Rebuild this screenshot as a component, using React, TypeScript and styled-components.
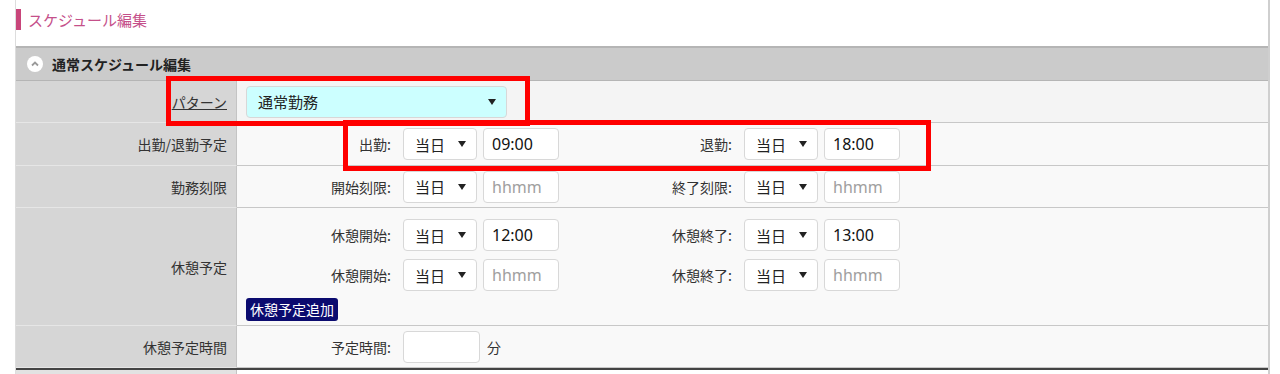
import React from 'react'
import styled, { createGlobalStyle } from 'styled-components'

const GlobalStyle = createGlobalStyle`
  body {
    margin: 0;
    background: #ffffff;
    font-family: 'Noto Sans CJK JP', 'Noto Sans', sans-serif;
    color: #333333;
  }
`

const Page = styled.div`
  position: relative;
  width: 1280px;
  height: 374px;
  overflow: hidden;
  padding-left: 15px;
  padding-right: 10px;
  box-sizing: border-box;
`

const Panel = styled.div`
  border-left: 1px solid #dddddd;
  border-right: 2px solid #cfcfcf;
  height: 100%;
`

const TitleBar = styled.div`
  height: 46px;
  padding-top: 9px;
  box-sizing: border-box;
`

const Title = styled.h1`
  margin: 0;
  border-left: 5px solid #c8457a;
  padding-left: 7px;
  height: 21px;
  line-height: 21px;
  font-size: 15px;
  font-weight: normal;
  color: #c5508a;
`

const SectionHeader = styled.div`
  display: flex;
  align-items: center;
  gap: 9px;
  height: 35px;
  padding-left: 11px;
  background: #cbcbcb;
  border-top: 2px solid #b5b5b5;
  border-bottom: 1px solid #b5b5b5;
  box-sizing: border-box;
  font-size: 14px;
  font-weight: bold;
  color: #222222;
`

const Toggle = styled.span`
  display: inline-flex;
  align-items: center;
  justify-content: center;
  width: 16px;
  height: 16px;
  border-radius: 50%;
  background: #ffffff;
`

const Table = styled.div`
  display: grid;
  grid-template-columns: 221px 1fr;
`

const LabelCell = styled.div`
  display: flex;
  align-items: center;
  justify-content: flex-end;
  padding-right: 9px;
  background: #d6d6d6;
  border-right: 1px solid #c4c4c4;
  border-bottom: 1px solid #e6e6e6;
  font-size: 14px;
  color: #333333;
`

const ValueCell = styled.div<{ $h: number; $shade?: boolean; $top?: boolean }>`
  display: flex;
  flex-direction: column;
  justify-content: ${p => (p.$top ? 'flex-start' : 'center')};
  gap: 8px;
  height: ${p => p.$h}px;
  padding-left: 9px;
  padding-top: ${p => (p.$top ? 11 : 0)}px;
  box-sizing: border-box;
  background: ${p => (p.$shade ? '#f4f4f4' : '#f9f9f9')};
  border-bottom: 1px solid #c8c8c8;
`

const FooterRule = styled.div`
  display: grid;
  grid-template-columns: 221px 1fr;
  height: 4px;
  border-top: 2px solid #444444;
  & > span:first-child {
    background: #e2e2e2;
    border-right: 1px solid #c4c4c4;
  }
`

const FieldRow = styled.div`
  display: flex;
  align-items: center;
`

const FieldLabel = styled.span<{ $w: number }>`
  width: ${p => p.$w}px;
  padding-right: 12px;
  box-sizing: content-box;
  text-align: right;
  font-size: 14px;
  color: #333333;
  flex-shrink: 0;
`

const PatternLink = styled.a`
  color: #333333;
  text-decoration: underline;
  font-size: 14px;
`

const SelectBox = styled.div<{ $w: number; $tint?: boolean }>`
  display: flex;
  align-items: center;
  justify-content: space-between;
  width: ${p => p.$w}px;
  height: 32px;
  padding: 0 10px 0 11px;
  box-sizing: border-box;
  border: 1px solid #d8d8d8;
  border-radius: 4px;
  background: ${p => (p.$tint ? '#ccffff' : '#ffffff')};
  font-size: 15px;
  color: #222222;
  flex-shrink: 0;
`

const Caret = styled.span`
  width: 0;
  height: 0;
  border-left: 4px solid transparent;
  border-right: 4px solid transparent;
  border-top: 6px solid #222222;
`

const TimeInput = styled.input<{ $w?: number; $gap?: number }>`
  width: ${p => p.$w ?? 76}px;
  height: 32px;
  margin-left: ${p => p.$gap ?? 6}px;
  padding: 0 8px;
  box-sizing: border-box;
  border: 1px solid #d8d8d8;
  border-radius: 4px;
  background: #ffffff;
  font-family: 'Noto Sans', 'Noto Sans CJK JP', sans-serif;
  font-size: 16px;
  color: #111111;
  flex-shrink: 0;
  &::placeholder {
    color: #a0a0a0;
  }
`

const Unit = styled.span`
  margin-left: 7px;
  font-size: 14px;
  color: #333333;
`

const AddButton = styled.button`
  align-self: flex-start;
  height: 23px;
  margin-top: -1px;
  padding: 0 4px;
  border: none;
  border-radius: 3px;
  background: #0b0b6f;
  color: #ffffff;
  font-family: 'Noto Sans CJK JP', 'Noto Sans', sans-serif;
  font-size: 14px;
  line-height: 23px;
`

const Callout = styled.div<{ $x: number; $y: number; $w: number; $h: number }>`
  position: absolute;
  left: ${p => p.$x}px;
  top: ${p => p.$y}px;
  width: ${p => p.$w}px;
  height: ${p => p.$h}px;
  border: 5px solid #ff0000;
  box-sizing: border-box;
  pointer-events: none;
`

type Pair = { label: string; value?: string; w: number }

const LEFT_W = 145
const RIGHT_W = 173

function TimePair({ label, value, w }: Pair) {
  return (
    <>
      <FieldLabel $w={w}>{label}</FieldLabel>
      <SelectBox $w={74}>
        当日
        <Caret />
      </SelectBox>
      <TimeInput readOnly defaultValue={value} placeholder="hhmm" />
    </>
  )
}

function PairRow({ left, right }: { left: Pair; right: Pair }) {
  return (
    <FieldRow>
      <TimePair {...left} />
      <TimePair {...right} />
    </FieldRow>
  )
}

function App(): JSX.Element {
  return (
    <Page>
      <GlobalStyle />
      <Panel>
        <TitleBar>
          <Title>スケジュール編集</Title>
        </TitleBar>
        <SectionHeader>
          <Toggle>
            <svg width="10" height="10" viewBox="0 0 10 10">
              <path d="M2 6.5 L5 3.5 L8 6.5" fill="none" stroke="#9a9a9a" strokeWidth="1.8" />
            </svg>
          </Toggle>
          通常スケジュール編集
        </SectionHeader>
        <Table>
          <LabelCell>
            <PatternLink>パターン</PatternLink>
          </LabelCell>
          <ValueCell $h={42} $shade>
            <SelectBox $w={261} $tint>
              通常勤務
              <Caret />
            </SelectBox>
          </ValueCell>

          <LabelCell>出勤/退勤予定</LabelCell>
          <ValueCell $h={43}>
            <PairRow left={{ label: '出勤:', value: '09:00', w: LEFT_W }} right={{ label: '退勤:', value: '18:00', w: RIGHT_W }} />
          </ValueCell>

          <LabelCell>勤務刻限</LabelCell>
          <ValueCell $h={42}>
            <PairRow left={{ label: '開始刻限:', w: LEFT_W }} right={{ label: '終了刻限:', w: RIGHT_W }} />
          </ValueCell>

          <LabelCell>休憩予定</LabelCell>
          <ValueCell $h={118} $top>
            <PairRow left={{ label: '休憩開始:', value: '12:00', w: LEFT_W }} right={{ label: '休憩終了:', value: '13:00', w: RIGHT_W }} />
            <PairRow left={{ label: '休憩開始:', w: LEFT_W }} right={{ label: '休憩終了:', w: RIGHT_W }} />
            <AddButton>休憩予定追加</AddButton>
          </ValueCell>

          <LabelCell>休憩予定時間</LabelCell>
          <ValueCell $h={42}>
            <FieldRow>
              <FieldLabel $w={LEFT_W}>予定時間:</FieldLabel>
              <TimeInput readOnly $w={77} $gap={0} />
              <Unit>分</Unit>
            </FieldRow>
          </ValueCell>
        </Table>
        <FooterRule>
          <span />
          <span />
        </FooterRule>
      </Panel>
      <Callout $x={166} $y={76} $w={364} $h={50} />
      <Callout $x={343} $y={120} $w={588} $h={51} />
    </Page>
  )
}

export default App
